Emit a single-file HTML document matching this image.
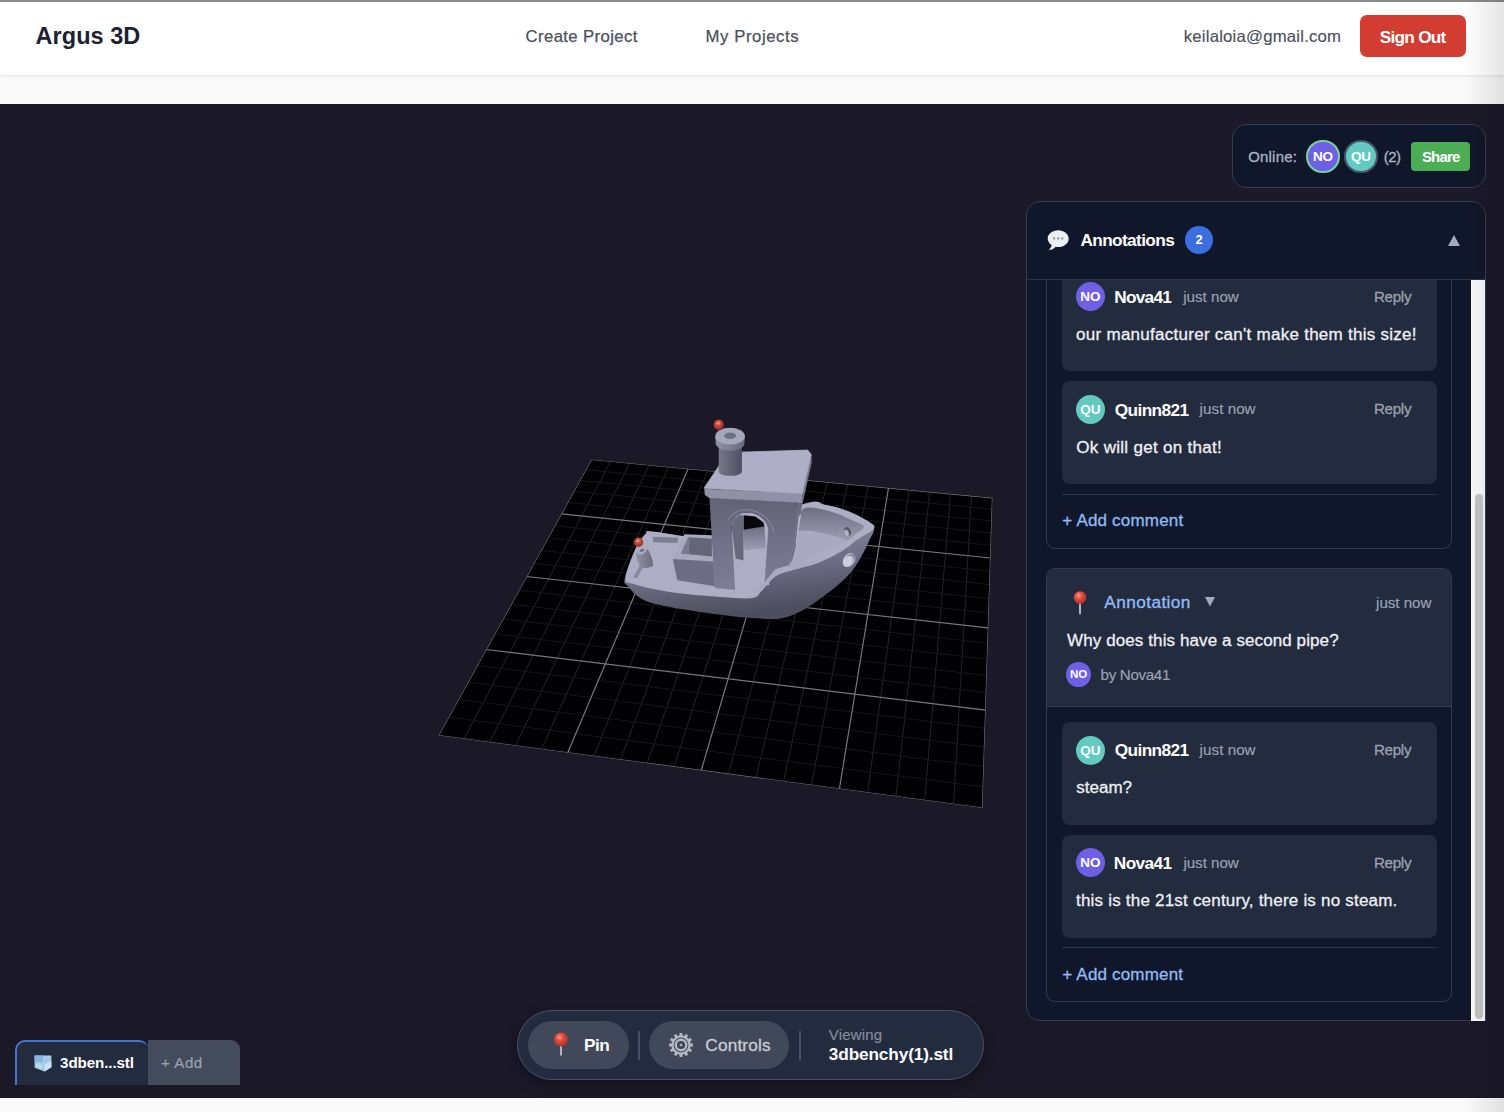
<!DOCTYPE html>
<html lang="en">
<head>
<meta charset="utf-8">
<title>Argus 3D</title>
<style>
*{box-sizing:border-box;margin:0;padding:0}
html,body{width:1504px;height:1112px;overflow:hidden;background:#fafafa;font-family:"Liberation Sans",sans-serif;}
.abs{position:absolute}
.t{position:absolute;white-space:nowrap;line-height:1}
#topline{left:0;top:0;width:1504px;height:1.5px;background:#8a8a8a}
#header{left:0;top:1px;width:1504px;height:74px;background:#fff;box-shadow:0 1px 3px rgba(0,0,0,.10)}
#viewer{left:0;top:104px;width:1504px;height:994px;background:#1b1928}
#edge{left:1464px;top:0;width:40px;height:1112px;background:linear-gradient(90deg,rgba(0,0,0,0),rgba(0,0,0,.10))}
.btn-out{left:1360px;top:15px;width:106px;height:42px;border-radius:7px;background:#d23c31}
.box{background:#11172a;border:1px solid #343c53}
.cm{background:#232b3e;border-radius:8px}
.av{position:absolute;border-radius:50%;color:#fff;font-weight:bold;text-align:center}
.no{background:#6c5ce0}
.qu{background:#5fc8be}
.gray{color:#9aa1b1}
.w{color:#f1f3f7}
</style>
</head>
<body>
<div class="abs" id="header"></div>
<div class="abs" id="topline"></div>
<div class="abs btn-out"></div>

<div class="abs" id="viewer"></div>

<!-- SCENE -->
<svg class="abs" id="scene" style="left:0;top:104px" width="1504" height="994" viewBox="0 104 1504 994">
<path d="M591.5 459.5 L992.5 497.8 L982.5 808.0 L438.5 735.5Z" fill="#010103"/>
<clipPath id="gc"><path d="M591.5 459.5 L992.5 497.8 L982.5 808.0 L438.5 735.5Z"/></clipPath>
<filter id="gb" x="-5%" y="-5%" width="110%" height="110%"><feGaussianBlur stdDeviation="0.45"/></filter>
<g clip-path="url(#gc)"><g filter="url(#gb)">
<path d="M610.6 461.3 L464.0 738.9 M629.8 463.2 L489.6 742.3 M649.1 465.0 L515.5 745.8 M668.6 466.9 L541.5 749.2 M707.6 470.6 L594.0 756.2 M727.3 472.5 L620.5 759.8 M747.1 474.4 L647.2 763.3 M767.0 476.3 L674.1 766.9 M807.1 480.1 L728.5 774.1 M827.3 482.0 L755.9 777.8 M847.6 484.0 L783.6 781.5 M868.0 485.9 L811.4 785.2 M909.1 489.8 L867.6 792.7 M929.8 491.8 L896.0 796.5 M950.6 493.8 L924.7 800.3 M971.5 495.8 L953.5 804.1" stroke="#242428" stroke-width="1" fill="none"/>
<path d="M585.8 469.8 L992.1 509.2 M579.9 480.4 L991.8 520.9 M573.9 491.2 L991.4 532.9 M567.7 502.4 L991.0 545.3 M554.8 525.7 L990.1 571.2 M548.1 537.9 L989.7 584.7 M541.1 550.4 L989.2 598.7 M534.0 563.3 L988.8 613.1 M519.0 590.2 L987.8 643.3 M511.2 604.3 L987.3 659.2 M503.1 618.9 L986.8 675.6 M494.8 634.0 L986.2 692.5 M477.3 665.5 L985.1 728.3 M468.1 682.1 L984.5 747.1 M458.6 699.3 L983.8 766.7 M448.7 717.1 L983.2 786.9" stroke="#161619" stroke-width="1" fill="none"/>
<path d="M591.5 459.5 L438.5 735.5 M591.5 459.5 L992.5 497.8 M688.1 468.7 L567.7 752.7 M561.4 513.9 L990.6 558.0 M787.0 478.2 L701.2 770.5 M526.6 576.5 L988.3 627.9 M888.5 487.9 L839.4 788.9 M486.2 649.5 L985.7 710.1 M992.5 497.8 L982.5 808.0 M438.5 735.5 L982.5 808.0" stroke="#77777d" stroke-width="1.2" fill="none"/>
</g></g>
<defs>
<linearGradient id="gHull" x1="0" y1="0" x2="0.25" y2="1"><stop offset="0" stop-color="#9696ac"/><stop offset="0.45" stop-color="#80809a"/><stop offset="1" stop-color="#4e4e60"/></linearGradient>
<linearGradient id="gInner" x1="0" y1="0" x2="0" y2="1"><stop offset="0" stop-color="#6e6e82"/><stop offset="1" stop-color="#9d9db2"/></linearGradient>
<linearGradient id="gPipe" x1="0" y1="0" x2="1" y2="0"><stop offset="0" stop-color="#9292a8"/><stop offset="1" stop-color="#6a6a7c"/></linearGradient>
<linearGradient id="gWall" x1="0" y1="0" x2="0" y2="1"><stop offset="0" stop-color="#626275"/><stop offset="0.5" stop-color="#717187"/><stop offset="1" stop-color="#7d7d94"/></linearGradient>
<linearGradient id="gPipe2" x1="0" y1="0" x2="1" y2="0"><stop offset="0" stop-color="#77778b"/><stop offset="1" stop-color="#4f4f60"/></linearGradient>
<radialGradient id="gBall" cx="0.45" cy="0.35" r="0.65"><stop offset="0" stop-color="#f0a596"/><stop offset="0.35" stop-color="#cf4c3e"/><stop offset="1" stop-color="#8a2c24"/></radialGradient>
</defs>
<path d="M645.6 533.7 C642.8 536.5 639.2 541.1 635.7 548.5 C632.3 555.9 626.2 571.9 624.8 578.2 C623.5 584.4 624.7 582.5 627.8 586.1 C630.9 589.7 635.7 596.3 643.6 599.9 C651.6 603.6 662.4 605.4 675.3 607.9 C688.2 610.3 708.6 613.1 720.8 614.8 C733.0 616.4 738.9 617.1 748.5 617.8 C758.1 618.4 769.6 619.7 778.2 618.7 C786.8 617.8 792.4 615.6 799.9 611.8 C807.5 608.0 815.8 601.9 823.7 596.0 C831.6 590.1 841.2 582.8 847.4 576.2 C853.7 569.6 857.7 562.4 861.3 556.4 C864.9 550.5 867.1 545.2 869.2 540.6 C871.3 536.0 874.5 532.0 874.1 528.7 C873.8 525.4 871.7 523.8 867.2 520.8 C862.8 517.8 854.4 513.5 847.4 510.9 C840.5 508.3 832.9 506.1 825.7 505.0 C818.4 503.8 821.4 498.7 803.9 504.0 C786.4 509.3 746.0 532.0 720.8 536.6 C695.6 541.2 665.1 532.2 652.5 531.7 C640.0 531.2 648.4 530.9 645.6 533.7Z" fill="url(#gHull)" />
<path d="M646.6 533.1 C649.4 530.2 640.2 530.9 652.5 531.5 C664.9 532.1 695.6 541.2 720.8 536.6 C746.0 532.0 786.4 509.3 803.9 504.0 C821.4 498.7 818.4 503.8 825.7 505.0 C832.9 506.1 840.5 508.3 847.4 510.9 C854.4 513.5 862.8 517.9 867.2 520.8 C871.7 523.7 875.8 525.2 874.1 528.3 C872.5 531.5 862.5 535.9 857.3 539.6 C852.1 543.3 849.5 546.6 842.9 550.5 C836.3 554.4 826.9 559.5 817.8 562.9 C808.6 566.4 795.3 568.9 788.1 571.3 C780.8 573.6 778.7 573.9 774.2 577.2 C769.8 580.5 765.0 587.6 761.4 591.0 C757.7 594.5 759.2 597.0 752.5 598.0 C745.7 599.0 734.7 598.0 720.8 597.0 C707.0 596.0 683.9 594.2 669.4 592.0 C654.8 589.9 641.1 586.4 633.7 584.1 C626.4 581.8 625.1 584.1 625.4 578.2 C625.8 572.2 632.2 556.0 635.7 548.5 C639.3 541.0 643.8 535.9 646.6 533.1Z" fill="#adadc4" />
<path d="M652.5 536.7 L678.3 537.7 L677.3 543.1 L653.5 542.2Z" fill="#7e7e92" />
<path d="M639.7 565.4 L642.7 568.4 L636.7 578.3 L633.3 577.3Z" fill="#8a8a9e" />
<path d="M636.2 553.0 C634.9 555.7 638.4 562.9 639.7 565.4 C640.9 567.9 642.0 567.6 643.6 567.9 C645.3 568.2 648.0 567.8 649.6 567.2 C651.1 566.5 653.4 566.9 653.0 563.9 C652.7 561.0 650.2 551.4 647.4 549.6 C644.6 547.8 637.5 550.4 636.2 553.0Z" fill="url(#gPipe)" />
<ellipse cx="641.5" cy="551.1" rx="5.3" ry="3.0" fill="#a9a9be" transform="rotate(-18 641.5 551.1)" />
<ellipse cx="641.9" cy="550.4" rx="2.2" ry="1.2" fill="#646476" transform="rotate(-18 641.9 550.4)" />
<ellipse cx="638.5" cy="542.2" rx="4.7" ry="4.7" fill="url(#gBall)" />
<path d="M672.8 559.0 L684.2 534.2 L711.9 535.2 L713.4 561.4Z" fill="#a9a9be" />
<path d="M688.2 537.2 L711.9 538.7 L711.9 556.5 L681.2 553.5Z" fill="#656578" />
<path d="M688.2 537.2 L681.2 553.5 L689.2 554.2 L689.2 537.7Z" fill="#7b7b90" />
<path d="M672.8 559.0 L713.4 561.4 L714.9 586.2 L677.3 580.2Z" fill="#6d6d83" />
<path d="M803.3 508.9 C808.5 505.5 822.5 509.6 830.4 511.4 C838.2 513.2 844.9 517.1 850.5 519.6 C856.1 522.1 862.9 524.1 863.7 526.5 C864.6 528.9 858.6 531.8 855.5 534.1 C852.5 536.4 850.7 540.5 845.5 540.4 C840.2 540.3 831.8 534.9 824.1 533.4 C816.3 532.0 802.3 535.6 798.9 531.5 C795.4 527.5 798.0 512.2 803.3 508.9Z" fill="url(#gInner)" />
<path d="M798.9 531.5 C804.3 528.7 816.3 532.0 824.1 533.4 C831.8 534.9 843.4 538.5 845.5 540.4 C847.6 542.2 842.3 541.4 836.7 544.4 C831.0 547.3 818.8 554.2 811.5 558.0 C804.1 561.7 796.6 564.7 792.6 566.8 C788.6 568.9 787.8 573.3 787.6 570.6 C787.3 567.8 789.4 556.9 791.3 550.4 C793.2 543.9 793.4 534.4 798.9 531.5Z" fill="#a9a9c0" />
<ellipse cx="847.7" cy="531.3" rx="3.0" ry="4.5" fill="#5a5a6c" transform="rotate(-25 847.7 531.3)" />
<ellipse cx="846.7" cy="532.8" rx="1.8" ry="3.3" fill="#b5b5ca" transform="rotate(-25 846.7 532.8)" />
<ellipse cx="849.0" cy="560.0" rx="5.5" ry="7.6" fill="#c2c2d6" transform="rotate(38 849.0 560.0)" />
<ellipse cx="850.0" cy="559.0" rx="4.0" ry="6.3" fill="#8f8fa4" transform="rotate(38 850.0 559.0)" />
<ellipse cx="848.0" cy="561.3" rx="4.0" ry="6.0" fill="#cdcde0" transform="rotate(38 848.0 561.3)" />
<path d="M731.7 512.8 L769.3 512.8 L769.3 585.0 L733.6 589.9Z" fill="#adadc4" />
<path d="M743.5 529.6 L764.3 526.1 L765.8 548.4 L744.5 549.9Z" fill="url(#gInner)" />
<path d="M743.5 515.2 L755.4 516.5 L763.3 522.2 L764.5 526.4 L743.5 529.8Z" fill="#08080c" />
<path d="M731.7 526.6 L733.6 519.7 L739.6 514.7 L743.5 515.7 L743.5 560.4 L735.6 558.5Z" fill="#69697c" />
<path d="M796.5 499.9 L802.7 501.9 L799.4 519.7 L795.8 545.4 L792.5 559.3 L789.0 565.4 L793.0 549.4 L797.5 519.7Z" fill="#6c6c80" />
<path d="M798.9 515.9 L801.1 514.1 L796.8 541.4 L795.4 545.4Z" fill="#babace" />
<path d="M709.4 496.9 L796.5 499.9 L797.5 519.7 L793.0 549.4 L789.0 565.2 L775.2 569.2 L764.5 582.8 L768.3 529.6 C766.8 519.7 757.4 513.0 747.5 512.8 C738.6 512.6 732.2 518.7 731.7 526.6 L735.1 589.9 L714.8 588.0 Z" fill="url(#gWall)"/>
<path d="M728.2 519.7 C732.7 511.3 741.6 509.3 749.5 509.8 C761.3 511.3 771.7 520.7 773.4 531.6" fill="none" stroke="#9a9ab0" stroke-width="0.7"/>
<path d="M752.5 598.0 C753.5 597.5 757.7 594.5 761.4 591.0 C765.0 587.6 769.8 580.5 774.2 577.2 C778.7 573.9 780.8 573.6 788.1 571.3 C795.3 568.9 812.8 564.9 817.8 562.9 C822.7 561.0 822.7 558.8 817.8 559.4 C812.8 560.0 795.2 564.7 788.1 566.7 C781.0 568.7 779.3 568.4 775.2 571.3 C771.1 574.2 766.6 580.3 763.3 584.1 C760.0 587.9 757.2 591.7 755.4 594.0 C753.6 596.3 751.5 598.5 752.5 598.0Z" fill="#a9a9c0" />
<path d="M811.2 454.5 L811.9 461.4 L803.0 502.0 L802.3 493.6Z" fill="#74748a" />
<path d="M704.3 488.7 L802.3 493.6 L802.8 502.0 L800.8 502.8 L709.3 497.9 L704.8 495.1Z" fill="#9090a6" />
<path d="M703.9 488.2 L728.1 452.5 L807.7 450.1 L811.2 454.5 L802.3 493.6Z" fill="#aeaec6" stroke="#aeaec6" stroke-width="0.8" stroke-linejoin="round"/>
<path d="M718.7 444.6 L718.7 471.8 A11.6 4.0 0 0 0 741.9 471.8 L741.9 444.6 Z" fill="url(#gPipe2)"/>
<path d="M715.2 436.2 L715.9 444.6 A14.4 7.4 0 0 0 744.4 444.1 L744.9 436.2 Z" fill="url(#gPipe)"/>
<ellipse cx="730.1" cy="436.2" rx="14.8" ry="8.4" fill="#a6a6bc" />
<ellipse cx="730.1" cy="435.7" rx="5.9" ry="3.2" fill="#6a707e" />
<ellipse cx="718.7" cy="424.8" rx="5.1" ry="5.1" fill="url(#gBall)" />
</svg>

<!-- ONLINE -->
<div class="abs box" style="left:1232px;top:124px;width:254px;height:64px;border-radius:14px"></div>
<div class="abs" style="left:1411px;top:142px;width:59px;height:29px;border-radius:4px;background:#4cae54"></div>

<!-- PANEL -->
<div class="abs box" id="panel" style="left:1026px;top:201px;width:460px;height:820px;border-radius:14px 14px 0 14px"></div>
<div class="abs" style="left:1027px;top:279px;width:458px;height:1px;background:#2b3349"></div>
<!-- panel header -->
<svg class="abs" style="left:1046px;top:228px" width="25" height="25" viewBox="0 0 25 25"><path d="M12.2 2.2C6.400 2.200 1.700 5.900 1.700 10.500c0 2.600 1.500 4.900 3.900 6.400-.3 2-1.300 3.800-2.800 5.300 2.800-.2 5.200-1.400 6.900-3.400.8.100 1.600.200 2.500.200 5.800 0 10.500-3.700 10.500-8.300S18 2.200 12.200 2.200z" fill="#eeeff2"/><circle cx="8.100" cy="10.500" r="1.150" fill="#8f94a0"/><circle cx="12.200" cy="10.500" r="1.150" fill="#8f94a0"/><circle cx="16.300" cy="10.500" r="1.150" fill="#8f94a0"/></svg>
<div class="av" style="left:1185px;top:226px;width:28px;height:28px;background:#3b6fe0;font-size:13px;line-height:28px">2</div>
<svg class="abs" style="left:1447px;top:234px" width="14" height="13" viewBox="0 0 14 13"><path d="M7 1 L13 12 L1 12Z" fill="#a5aaba"/></svg>

<!-- scrollbar -->
<div class="abs" style="left:1471px;top:280px;width:14px;height:741px;background:#fafafa"></div>
<div class="abs" style="left:1475px;top:494px;width:8px;height:525px;border-radius:4px;background:#c6c6c6"></div>

<!-- CARD 1 -->
<div class="abs" style="left:1046px;top:280px;width:406px;height:269px;border:1px solid #323a50;border-top:none;border-radius:0 0 9px 9px"></div>
<div class="abs cm" style="left:1062px;top:280px;width:375px;height:91px;border-radius:0 0 8px 8px"></div>

<div class="abs cm" style="left:1062px;top:381px;width:375px;height:103px"></div>
<div class="abs" style="left:1062px;top:494px;width:375px;height:1px;background:#2e364b"></div>

<!-- CARD 2 -->
<div class="abs" style="left:1046px;top:568px;width:406px;height:434px;border:1px solid #323a50;border-radius:9px;overflow:hidden"><div style="height:138px;background:#232b3e;border-bottom:1px solid #353d52"></div></div>
<svg class="abs" style="left:1069.7px;top:589.5px" width="20" height="26" viewBox="0 0 20 26"><defs><radialGradient id="pg1" cx="0.400" cy="0.350" r="0.700"><stop offset="0" stop-color="#f6998a"/><stop offset="0.400" stop-color="#e3493c"/><stop offset="1" stop-color="#a92f26"/></radialGradient></defs><path d="M10 12 L10 23.5" stroke="#b4b6bd" stroke-width="2" stroke-linecap="round"/><circle cx="10" cy="7.500" r="6.3" fill="url(#pg1)"/></svg>
<svg class="abs" style="left:1204px;top:596px" width="12" height="11" viewBox="0 0 12 11"><path d="M1 1 L11 1 L6 10.500Z" fill="#a5aaba"/></svg>

<div class="abs cm" style="left:1062px;top:722px;width:375px;height:103px"></div>

<div class="abs cm" style="left:1062px;top:835px;width:375px;height:103px"></div>
<div class="abs" style="left:1062px;top:947px;width:375px;height:1px;background:#2e364b"></div>

<!-- TABS -->
<div class="abs" style="left:15px;top:1040px;width:134px;height:45px;background:#232b3e;border:2px solid #4a74cc;border-bottom:none;border-right:none;border-radius:10px 10px 0 0"></div>
<div class="abs" style="left:148px;top:1040px;width:92px;height:45px;background:#444b5c;border-radius:0 9px 0 0"></div>
<svg class="abs" style="left:33.500px;top:1055px" width="18" height="17" viewBox="0 0 18 17"><path d="M0.600 0.500 L17.400 0.500 L17.400 12.300 L10.500 16.500 L0.600 12.800Z" fill="#a3cbe9"/><path d="M0.600 0.500 L9 0.500 L9 7 L0.600 7Z" fill="#86b6df"/><path d="M10.500 9 L17.400 6 L17.400 12.300 L10.500 16.500Z" fill="#c9e2f4"/><path d="M2 8.500 L8 9.500 L8 14 L2 12Z" fill="#bcd9ef"/></svg>

<!-- TOOLBAR -->
<div class="abs" style="left:517px;top:1010px;width:467px;height:70px;border-radius:35px;background:#232b3e;border:1px solid #4a5268;box-shadow:0 4px 14px rgba(0,0,0,.35)"></div>
<div class="abs" style="left:528px;top:1021px;width:101px;height:48px;border-radius:24px;background:#404859"></div>
<svg class="abs" style="left:550.7px;top:1032.4px" width="20" height="26" viewBox="0 0 20 26"><defs><radialGradient id="pg2" cx="0.400" cy="0.350" r="0.700"><stop offset="0" stop-color="#f6998a"/><stop offset="0.400" stop-color="#e3493c"/><stop offset="1" stop-color="#a92f26"/></radialGradient></defs><path d="M10 12 L10 22.8" stroke="#b4b6bd" stroke-width="2" stroke-linecap="round"/><circle cx="10" cy="7.500" r="6.9" fill="url(#pg2)"/></svg>
<div class="abs" style="left:638px;top:1031px;width:2px;height:29px;background:#495166"></div>
<div class="abs" style="left:649px;top:1021px;width:140px;height:48px;border-radius:24px;background:#404859"></div>
<svg class="abs" style="left:668.200px;top:1031.900px" width="26" height="26" viewBox="0 0 26 26"><path d="M24.92 11.62 L24.92 14.38 L22.48 14.50 L21.96 16.44 L24.01 17.77 L22.63 20.15 L20.46 19.04 L19.04 20.46 L20.15 22.63 L17.77 24.01 L16.44 21.96 L14.50 22.48 L14.38 24.92 L11.62 24.92 L11.50 22.48 L9.56 21.96 L8.23 24.01 L5.85 22.63 L6.96 20.46 L5.54 19.04 L3.37 20.15 L1.99 17.77 L4.04 16.44 L3.52 14.50 L1.08 14.38 L1.08 11.62 L3.52 11.50 L4.04 9.56 L1.99 8.23 L3.37 5.85 L5.54 6.96 L6.96 5.54 L5.85 3.37 L8.23 1.99 L9.56 4.04 L11.50 3.52 L11.62 1.08 L14.38 1.08 L14.50 3.52 L16.44 4.04 L17.77 1.99 L20.15 3.37 L19.04 5.54 L20.46 6.96 L22.63 5.85 L24.01 8.23 L21.96 9.56 L22.48 11.50Z M13 5.600 A7.400 7.400 0 1 0 13 20.400 A7.400 7.400 0 1 0 13 5.600Z" fill="#b4b8c2" fill-rule="evenodd"/><circle cx="13" cy="13" r="5.300" fill="none" stroke="#b4b8c2" stroke-width="2.400"/><circle cx="13" cy="13" r="1.300" fill="#b4b8c2"/></svg>
<div class="abs" style="left:799px;top:1031px;width:2px;height:29px;background:#495166"></div>

<div class="av" style="left:1306.2px;top:139.5px;width:33.6px;height:33.6px;background:#6f5fe6;font-size:13.5px;line-height:29.6px;letter-spacing:-0.2px;border:2px solid #77d4a2">NO</div>
<div class="av" style="left:1344.4px;top:139.7px;width:33.2px;height:33.2px;background:#62cac1;font-size:13.5px;line-height:29.2px;letter-spacing:-0.2px;border:2px solid #46566b">QU</div>
<div class="av" style="left:1075.7px;top:282.1px;width:29.2px;height:29.2px;background:#6f5fe6;font-size:13.5px;line-height:29.2px;letter-spacing:-0.2px">NO</div>
<div class="av" style="left:1075.7px;top:395.0px;width:29.2px;height:29.2px;background:#62cac1;font-size:13.5px;line-height:29.2px;letter-spacing:-0.2px">QU</div>
<div class="av" style="left:1066.2px;top:662.2px;width:24.6px;height:24.6px;background:#6f5fe6;font-size:11.5px;line-height:24.6px;letter-spacing:-0.2px">NO</div>
<div class="av" style="left:1075.7px;top:735.6px;width:29.2px;height:29.2px;background:#62cac1;font-size:13.5px;line-height:29.2px;letter-spacing:-0.2px">QU</div>
<div class="av" style="left:1075.7px;top:848.2px;width:29.2px;height:29.2px;background:#6f5fe6;font-size:13.5px;line-height:29.2px;letter-spacing:-0.2px">NO</div>
<div class="t" style="left:35.6px;top:25.0px;font-size:23.51px;color:#1d1f33;letter-spacing:0.03px;font-weight:bold">Argus 3D</div>
<div class="t" style="left:525.6px;top:29.0px;font-size:16.72px;color:#4b505d;letter-spacing:0.38px;-webkit-text-stroke:0.25px #4b505d">Create Project</div>
<div class="t" style="left:705.5px;top:29.0px;font-size:16.72px;color:#4b505d;letter-spacing:0.59px;-webkit-text-stroke:0.25px #4b505d">My Projects</div>
<div class="t" style="left:1183.8px;top:29.0px;font-size:16.72px;color:#4b505d;letter-spacing:0.21px;-webkit-text-stroke:0.15px #4b505d">keilaloia@gmail.com</div>
<div class="t" style="left:1379.8px;top:29.0px;font-size:17.24px;color:#ffffff;letter-spacing:-0.75px;font-weight:bold">Sign Out</div>
<div class="t" style="left:1248.2px;top:150.0px;font-size:14.94px;color:#adb2c1;letter-spacing:0.22px;-webkit-text-stroke:0.3px #adb2c1">Online:</div>
<div class="t" style="left:1383.8px;top:150.0px;font-size:14.94px;color:#adb2c1;letter-spacing:-0.49px;-webkit-text-stroke:0.3px #adb2c1">(2)</div>
<div class="t" style="left:1421.9px;top:150.0px;font-size:14.94px;color:#ffffff;letter-spacing:-0.80px;font-weight:bold">Share</div>
<div class="t" style="left:1080.5px;top:232.0px;font-size:17.24px;color:#ffffff;letter-spacing:-0.63px;font-weight:bold">Annotations</div>
<div class="t" style="left:1114.2px;top:289.0px;font-size:17.24px;color:#ffffff;letter-spacing:-0.73px;font-weight:bold">Nova41</div>
<div class="t" style="left:1183.2px;top:289.0px;font-size:15.15px;color:#9ba1b0;letter-spacing:-0.00px;-webkit-text-stroke:0.2px #9ba1b0">just now</div>
<div class="t" style="left:1374.0px;top:289.0px;font-size:15.15px;color:#9ba1b0;letter-spacing:-0.31px;-webkit-text-stroke:0.3px #9ba1b0">Reply</div>
<div class="t" style="left:1076.1px;top:326.0px;font-size:17.03px;color:#eef0f5;letter-spacing:0.26px;-webkit-text-stroke:0.3px #eef0f5">our manufacturer can't make them this size!</div>
<div class="t" style="left:1114.8px;top:402.0px;font-size:17.24px;color:#ffffff;letter-spacing:-0.62px;font-weight:bold">Quinn821</div>
<div class="t" style="left:1199.6px;top:401.0px;font-size:15.15px;color:#9ba1b0;letter-spacing:0.06px;-webkit-text-stroke:0.2px #9ba1b0">just now</div>
<div class="t" style="left:1374.0px;top:401.0px;font-size:15.15px;color:#9ba1b0;letter-spacing:-0.31px;-webkit-text-stroke:0.3px #9ba1b0">Reply</div>
<div class="t" style="left:1076.3px;top:439.0px;font-size:17.03px;color:#eef0f5;letter-spacing:0.29px;-webkit-text-stroke:0.3px #eef0f5">Ok will get on that!</div>
<div class="t" style="left:1062.3px;top:512.0px;font-size:17.03px;color:#8fbcf7;letter-spacing:0.18px;-webkit-text-stroke:0.3px #8fbcf7">+ Add comment</div>
<div class="t" style="left:1104.3px;top:594.0px;font-size:17.24px;color:#8fbcf7;letter-spacing:0.41px;-webkit-text-stroke:0.35px #8fbcf7">Annotation</div>
<div class="t" style="left:1376.1px;top:595.0px;font-size:15.15px;color:#9ba1b0;letter-spacing:-0.03px;-webkit-text-stroke:0.2px #9ba1b0">just now</div>
<div class="t" style="left:1067.1px;top:632.0px;font-size:17.03px;color:#eef0f5;letter-spacing:0.09px;-webkit-text-stroke:0.3px #eef0f5">Why does this have a second pipe?</div>
<div class="t" style="left:1100.6px;top:667.0px;font-size:15.15px;color:#9ba1b0;letter-spacing:-0.33px;-webkit-text-stroke:0.2px #9ba1b0">by Nova41</div>
<div class="t" style="left:1114.8px;top:742.0px;font-size:17.24px;color:#ffffff;letter-spacing:-0.62px;font-weight:bold">Quinn821</div>
<div class="t" style="left:1199.6px;top:742.0px;font-size:15.15px;color:#9ba1b0;letter-spacing:0.06px;-webkit-text-stroke:0.2px #9ba1b0">just now</div>
<div class="t" style="left:1374.0px;top:742.0px;font-size:15.15px;color:#9ba1b0;letter-spacing:-0.31px;-webkit-text-stroke:0.3px #9ba1b0">Reply</div>
<div class="t" style="left:1076.3px;top:779.0px;font-size:17.03px;color:#eef0f5;letter-spacing:-0.01px;-webkit-text-stroke:0.3px #eef0f5">steam?</div>
<div class="t" style="left:1113.8px;top:855.0px;font-size:17.24px;color:#ffffff;letter-spacing:-0.59px;font-weight:bold">Nova41</div>
<div class="t" style="left:1183.4px;top:855.0px;font-size:15.15px;color:#9ba1b0;letter-spacing:-0.03px;-webkit-text-stroke:0.2px #9ba1b0">just now</div>
<div class="t" style="left:1374.0px;top:855.0px;font-size:15.15px;color:#9ba1b0;letter-spacing:-0.31px;-webkit-text-stroke:0.3px #9ba1b0">Reply</div>
<div class="t" style="left:1076.0px;top:892.0px;font-size:17.03px;color:#eef0f5;letter-spacing:0.20px;-webkit-text-stroke:0.3px #eef0f5">this is the 21st century, there is no steam.</div>
<div class="t" style="left:1062.3px;top:966.0px;font-size:17.03px;color:#8fbcf7;letter-spacing:0.17px;-webkit-text-stroke:0.3px #8fbcf7">+ Add comment</div>
<div class="t" style="left:60.1px;top:1055.0px;font-size:15.15px;color:#ffffff;letter-spacing:-0.10px;font-weight:bold">3dben...stl</div>
<div class="t" style="left:160.9px;top:1055.0px;font-size:15.15px;color:#9ba1b0;letter-spacing:0.56px;-webkit-text-stroke:0.2px #9ba1b0">+ Add</div>
<div class="t" style="left:584.1px;top:1037.0px;font-size:17.24px;color:#ffffff;letter-spacing:-0.59px;font-weight:bold">Pin</div>
<div class="t" style="left:705.3px;top:1037.0px;font-size:17.24px;color:#c9cdd6;letter-spacing:0.16px;-webkit-text-stroke:0.3px #c9cdd6">Controls</div>
<div class="t" style="left:828.8px;top:1028.0px;font-size:14.94px;color:#858c9e;letter-spacing:0.21px;-webkit-text-stroke:0.2px #858c9e">Viewing</div>
<div class="t" style="left:828.8px;top:1046.0px;font-size:17.24px;color:#ffffff;letter-spacing:-0.14px;font-weight:bold">3dbenchy(1).stl</div>
<div class="abs" id="edge"></div>
</body>
</html>
